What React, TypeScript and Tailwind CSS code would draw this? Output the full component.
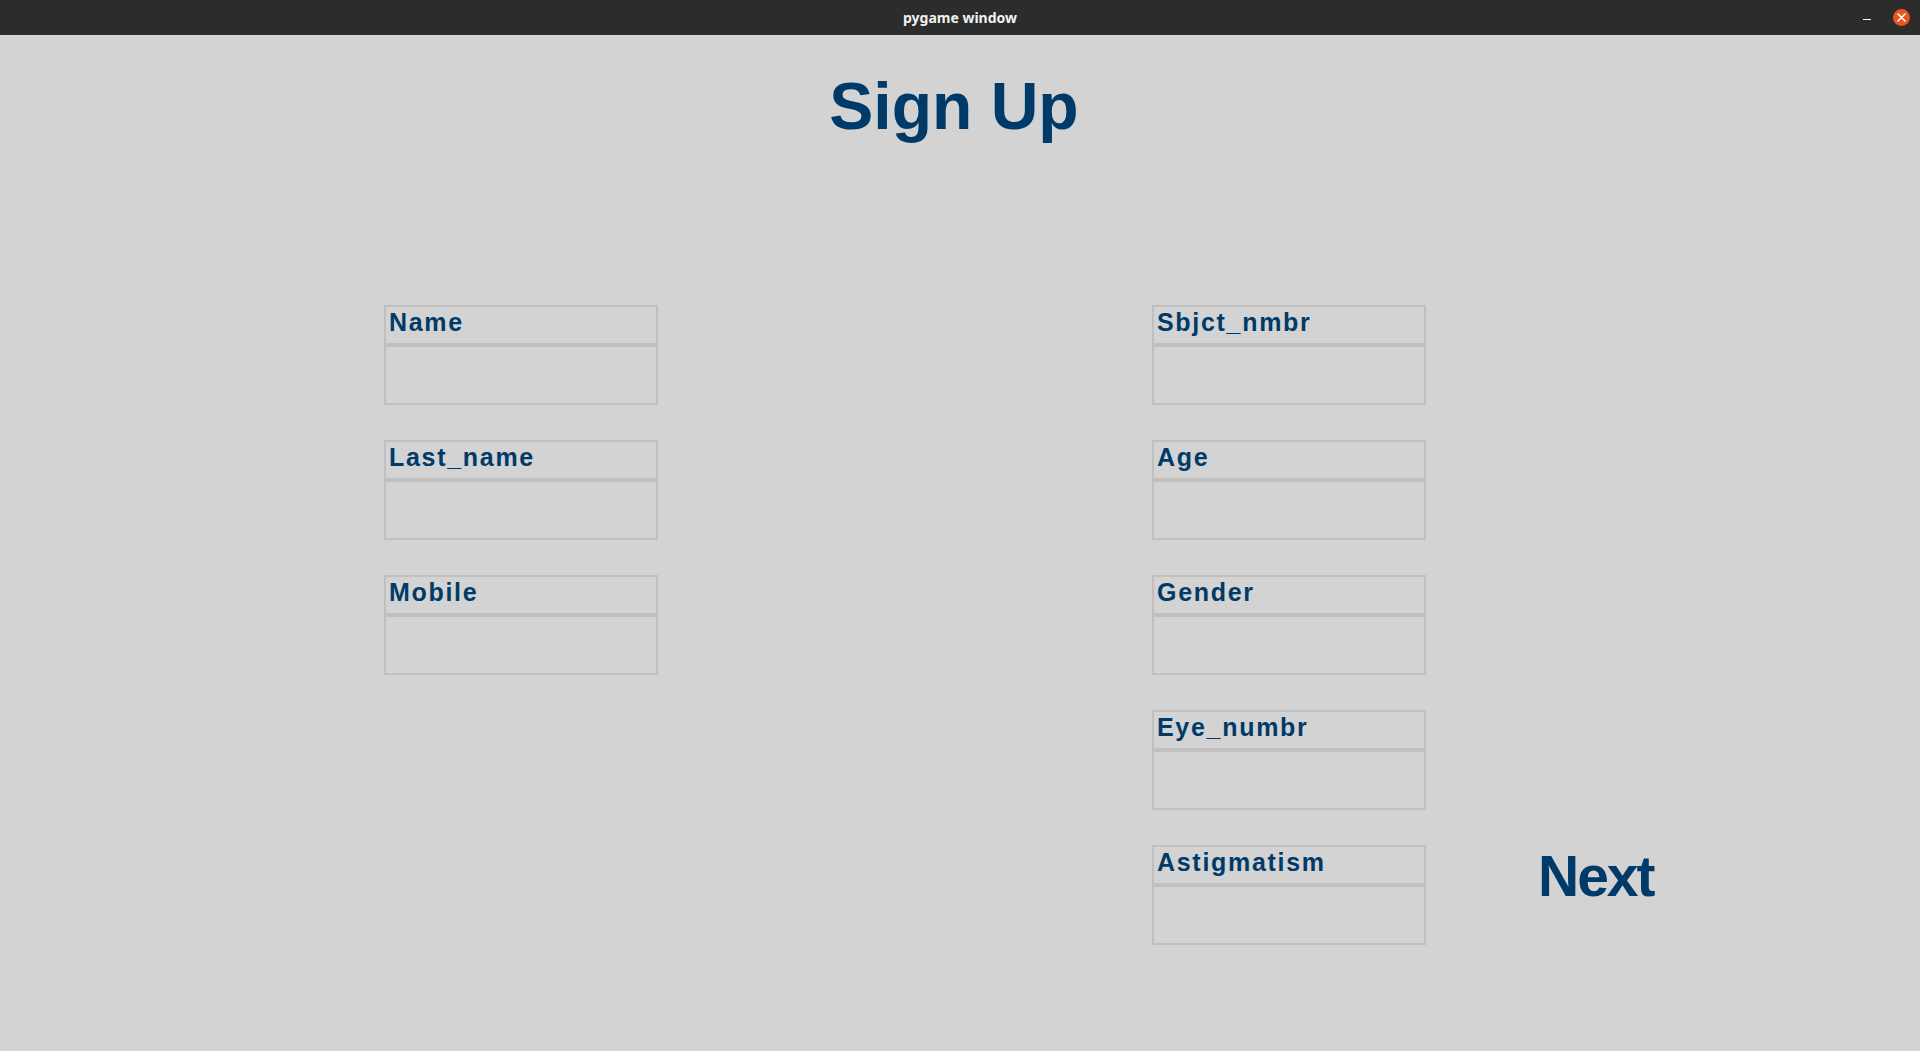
const leftFields = ['Name', 'Last_name', 'Mobile'];
const rightFields = ['Sbjct_nmbr', 'Age', 'Gender', 'Eye_numbr'];

function Field({ label }: { label: string }) {
  return (
    <div className="w-[274px] flex flex-col">
      <div className="h-[40px] border-2 border-[#c0c0c0] pl-[3px] pt-[3px]">
        <span className="text-[25px] leading-none font-bold tracking-[1.7px] text-[#003a68]">
          {label}
        </span>
      </div>
      <div className="h-[60px] border-2 border-[#c0c0c0]" />
    </div>
  );
}

export default function App() {
  return (
    <div className="h-[1051px] w-[1920px] flex flex-col bg-[#d3d3d3] font-['Liberation_Sans',Arial,sans-serif] overflow-hidden">
      {/* window title bar */}
      <div className="h-[35px] shrink-0 bg-[#2c2c2c] relative flex items-center justify-center">
        <span className="text-[14px] font-bold text-[#f2f2f2] font-['Noto_Sans',sans-serif]">pygame window</span>
        <div className="absolute right-[10px] top-0 h-[35px] flex items-center gap-[22px]">
          <div className="w-[8px] h-[1px] bg-white mt-[3px]" />
          <div className="w-[17px] h-[17px] rounded-full bg-[#e95420] flex items-center justify-center">
            <svg width="9" height="9" viewBox="0 0 9 9">
              <path d="M1 1 L8 8 M8 1 L1 8" stroke="white" strokeWidth="1.6" strokeLinecap="round" />
            </svg>
          </div>
        </div>
      </div>

      <div className="flex-1 flex flex-col">
        <h1 className="mt-[38px] pr-[12px] text-center text-[66px] leading-none font-bold text-[#003a68]">Sign Up</h1>

        <div className="mt-[166px] ml-[384px] flex items-start gap-[494px]">
          <div className="flex flex-col gap-[35px]">
            {leftFields.map((f) => (
              <Field key={f} label={f} />
            ))}
          </div>

          <div className="flex flex-col gap-[35px]">
            {rightFields.map((f) => (
              <Field key={f} label={f} />
            ))}
            <div className="flex items-start">
              <Field label="Astigmatism" />
              <span className="ml-[112px] mt-[3px] text-[57px] leading-none font-bold text-[#003a68] tracking-[-2px]">
                Next
              </span>
            </div>
          </div>
        </div>
      </div>
    </div>
  );
}
